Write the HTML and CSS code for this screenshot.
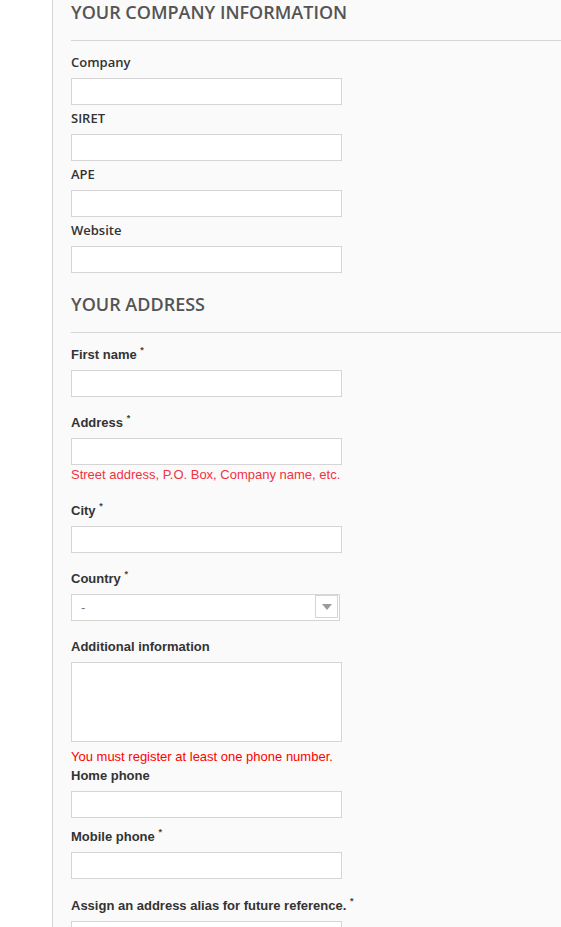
FILE: index.html
```html
<!DOCTYPE html>
<html>
<head>
<meta charset="utf-8">
<link rel="stylesheet" href="styles.css">
</head>
<body>
<div class="page">
  <div class="gutter"></div>
  <div class="main">
    <h3 class="heading">Your company information</h3>
    <div class="group-c first">
      <label class="label-c">Company</label>
      <div class="input"></div>
    </div>
    <div class="group-c">
      <label class="label-c">SIRET</label>
      <div class="input"></div>
    </div>
    <div class="group-c">
      <label class="label-c">APE</label>
      <div class="input"></div>
    </div>
    <div class="group-c">
      <label class="label-c">Website</label>
      <div class="input"></div>
    </div>

    <h3 class="heading second">Your address</h3>
    <div class="group g-first">
      <label class="label">First name <sup>*</sup></label>
      <div class="input"></div>
    </div>
    <div class="group g-address">
      <label class="label">Address <sup>*</sup></label>
      <div class="input"></div>
      <p class="hint">Street address, P.O. Box, Company name, etc.</p>
    </div>
    <div class="group g-city">
      <label class="label">City <sup>*</sup></label>
      <div class="input"></div>
    </div>
    <div class="group g-country">
      <label class="label">Country <sup>*</sup></label>
      <div class="select">
        <span class="select-text">-</span>
        <span class="select-arrow"><span class="tri"></span></span>
      </div>
    </div>
    <div class="group g-info">
      <label class="label">Additional information</label>
      <div class="textarea"></div>
    </div>
    <p class="warning">You must register at least one phone number.</p>
    <div class="group g-home">
      <label class="label">Home phone</label>
      <div class="input"></div>
    </div>
    <div class="group g-mobile">
      <label class="label">Mobile phone <sup>*</sup></label>
      <div class="input"></div>
    </div>
    <div class="group g-alias">
      <label class="label">Assign an address alias for future reference. <sup>*</sup></label>
      <div class="input"></div>
    </div>
  </div>
</div>
</body>
</html>
```
FILE: styles.css
```css
html, body {
  margin: 0;
  padding: 0;
  background: #ffffff;
  height: 100%;
  overflow: hidden;
}
.page {
  display: flex;
  min-height: 927px;
}
.gutter {
  width: 52px;
  flex: none;
  background: #ffffff;
}
.main {
  flex: 1;
  background: #fafafa;
  border-left: 1px solid #d6d4d4;
  padding-left: 18px;
  font-family: Arial, "Liberation Sans", sans-serif;
  font-size: 13px;
  color: #333333;
}
.heading {
  margin: 0;
  font-family: "Open Sans", sans-serif;
  font-weight: 600;
  font-size: 18px;
  line-height: 25px;
  text-transform: uppercase;
  color: #555454;
  padding-bottom: 15px;
  border-bottom: 1px solid #d6d4d4;
}
.heading.second {
  margin-top: 19px;
}
.group-c {
  margin-bottom: 4px;
}
.group-c.first {
  margin-top: 12px;
}
.label-c {
  display: block;
  font-family: "Open Sans", sans-serif;
  font-weight: 600;
  font-size: 13px;
  line-height: 18px;
  margin-bottom: 7px;
  color: #333333;
}
.label {
  display: block;
  font-weight: bold;
  font-size: 13px;
  line-height: 18px;
  padding-top: 1px;
  margin-bottom: 6px;
  color: #333333;
}
.label sup {
  font-size: 9px;
  line-height: 0;
  vertical-align: 6px;
  color: #444444;
}
.input {
  width: 271px;
  height: 27px;
  box-sizing: border-box;
  border: 1px solid #d6d4d4;
  background: #ffffff;
}
.textarea {
  width: 271px;
  height: 80px;
  box-sizing: border-box;
  border: 1px solid #d6d4d4;
  background: #ffffff;
}
.g-first { margin-top: 12px; }
.g-address { margin-top: 16px; }
.g-city { margin-top: 17px; }
.g-country { margin-top: 16px; }
.g-info { margin-top: 16px; }
.g-home { margin-top: 0; }
.g-mobile { margin-top: 9px; }
.g-alias { margin-top: 17px; }
.hint {
  margin: 0;
  padding-top: 1px;
  line-height: 18px;
  color: #f13340;
}
.warning {
  margin: 5px 0 0;
  padding-top: 1px;
  line-height: 18px;
  color: #ff0000;
}
.select {
  width: 269px;
  height: 27px;
  box-sizing: border-box;
  border: 1px solid #d6d4d4;
  background: #ffffff;
  display: flex;
  align-items: flex-start;
  padding: 0 1px 0 9px;
}
.select-text {
  flex: 1;
  line-height: 25px;
  color: #777777;
}
.select-arrow {
  width: 23px;
  height: 23px;
  box-sizing: border-box;
  border: 1px solid #d6d4d4;
  background: #ffffff;
  display: flex;
  align-items: center;
  justify-content: center;
}
.tri {
  width: 0;
  height: 0;
  border-left: 5px solid transparent;
  border-right: 5px solid transparent;
  border-top: 6px solid #9b9b9b;
}
```
